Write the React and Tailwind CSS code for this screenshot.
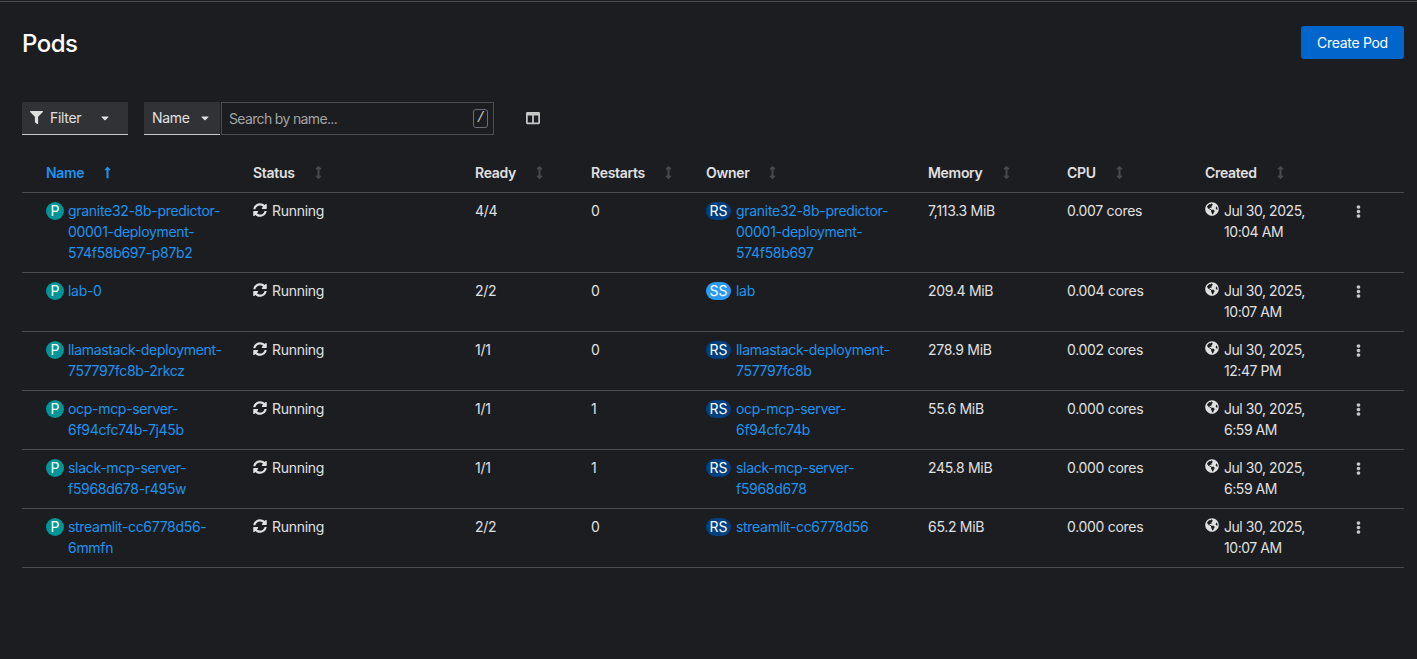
import { FaFilter, FaCaretDown, FaColumns, FaLongArrowAltUp, FaArrowsAltV, FaSyncAlt, FaGlobeAmericas, FaEllipsisV } from 'react-icons/fa'

const pods = [
  { name: 'granite32-8b-predictor-00001-deployment-574f58b697-p87b2', ready: '4/4', restarts: '0', kind: 'RS', owner: 'granite32-8b-predictor-00001-deployment-574f58b697', memory: '7,113.3 MiB', cpu: '0.007 cores', date: '10:04 AM' },
  { name: 'lab-0', ready: '2/2', restarts: '0', kind: 'SS', owner: 'lab', memory: '209.4 MiB', cpu: '0.004 cores', date: '10:07 AM' },
  { name: 'llamastack-deployment-757797fc8b-2rkcz', ready: '1/1', restarts: '0', kind: 'RS', owner: 'llamastack-deployment-757797fc8b', memory: '278.9 MiB', cpu: '0.002 cores', date: '12:47 PM' },
  { name: 'ocp-mcp-server-6f94cfc74b-7j45b', ready: '1/1', restarts: '1', kind: 'RS', owner: 'ocp-mcp-server-6f94cfc74b', memory: '55.6 MiB', cpu: '0.000 cores', date: '6:59 AM' },
  { name: 'slack-mcp-server-f5968d678-r495w', ready: '1/1', restarts: '1', kind: 'RS', owner: 'slack-mcp-server-f5968d678', memory: '245.8 MiB', cpu: '0.000 cores', date: '6:59 AM' },
  { name: 'streamlit-cc6778d56-6mmfn', ready: '2/2', restarts: '0', kind: 'RS', owner: 'streamlit-cc6778d56', memory: '65.2 MiB', cpu: '0.000 cores', date: '10:07 AM' },
]

const columns = [
  { label: 'Name', width: 'w-[231px]' },
  { label: 'Status', width: 'w-[222px]' },
  { label: 'Ready', width: 'w-[116px]' },
  { label: 'Restarts', width: 'w-[115px]' },
  { label: 'Owner', width: 'w-[222px]' },
  { label: 'Memory', width: 'w-[139px]' },
  { label: 'CPU', width: 'w-[138px]' },
  { label: 'Created', width: 'w-[135px]' },
]

function Badge({ kind }) {
  const color = kind === 'P' ? 'bg-[#009596] w-[18px]' : kind === 'SS' ? 'bg-[#2b9af3] w-[25px]' : 'bg-[#004080] w-[25px]'
  return (
    <span className={`${color} h-[18px] rounded-full text-white text-[14px] leading-[18px] tracking-normal text-center inline-block shrink-0 mt-[2px]`}>
      {kind}
    </span>
  )
}

export default function App() {
  return (
    <div className="min-h-screen bg-[#1b1d21] pt-[1px] font-['Inter',sans-serif] text-[14px] leading-[21px] tracking-[-0.3px] text-[#e0e0e0]">
      <div className="border-t border-[#4a4c50] pl-[22px] pr-[13px]">
        <div className="flex justify-between items-start pt-[24px]">
          <h1 className="text-[24px] leading-[36px] font-medium tracking-[-0.5px] text-white">Pods</h1>
          <button className="w-[103px] h-[33px] bg-[#0066cc] rounded-[3px] text-white text-[14px]">Create Pod</button>
        </div>

        <div className="flex items-stretch h-[33px] mt-[40px]">
          <button className="w-[106px] flex items-center pl-[8px] bg-[#303236] border-b border-[#c7c7c7] text-[#e0e0e0] pb-[1px]">
            <FaFilter className="text-[13px] mr-[7px]" />
            <span>Filter</span>
            <FaCaretDown className="text-[12px] ml-[18px] text-[#e0e0e0]" />
          </button>
          <button className="w-[76px] ml-[16px] flex items-center pl-[8px] bg-[#303236] border-b border-[#c7c7c7] text-[#e0e0e0] pb-[1px]">
            <span>Name</span>
            <FaCaretDown className="text-[12px] ml-[9px]" />
          </button>
          <div className="w-[273px] ml-[1px] flex items-center justify-between pl-[7px] pr-[5px] border border-[#4a4c50]">
            <span className="text-[#a3a3a3] tracking-[-0.65px] -mt-[1px]">Search by name...</span>
            <kbd className="w-[15px] h-[19px] border border-[#6a6e73] rounded-[3px] text-[14px] leading-[17px] text-center text-[#c7c7c7]">/</kbd>
          </div>
          <span className="ml-[32px] flex items-center text-[#c7c7c7] pb-[1px]"><FaColumns className="text-[14px]" /></span>
        </div>

        <table className="mt-[17px] w-[1382px] table-fixed border-collapse">
          <thead>
            <tr className="border-b border-[#4a4c50]">
              {columns.map((c, i) => (
                <th key={c.label} className={`${c.width} h-[40px] text-left align-middle font-semibold pt-[2px] ${i === 0 ? 'pl-[24px]' : ''}`}>
                  <span className={`inline-flex items-center ${i === 0 ? 'text-[#1f93ee]' : 'text-[#e0e0e0]'}`}>
                    {c.label}
                    {i === 0
                      ? <FaLongArrowAltUp className="text-[13px] ml-[17px] text-[#1f93ee]" />
                      : <FaArrowsAltV className="text-[13px] ml-[17px] text-[#46484c]" />}
                  </span>
                </th>
              ))}
              <th />
            </tr>
          </thead>
          <tbody>
            {pods.map(p => (
              <tr key={p.name} className="border-b border-[#4a4c50] align-top">
                <td className="pl-[24px] pr-[8px] pt-[7px] pb-[9px]">
                  <div className="flex gap-[4px]">
                    <Badge kind="P" />
                    <a className="text-[#1f93ee] break-words min-w-0">{p.name}</a>
                  </div>
                </td>
                <td className="pt-[7px] pb-[9px]">
                  <span className="flex items-center gap-[5px]"><FaSyncAlt className="text-[14px] text-[#e0e0e0]" />Running</span>
                </td>
                <td className="pt-[7px] pb-[9px]">{p.ready}</td>
                <td className="pt-[7px] pb-[9px]">{p.restarts}</td>
                <td className="pt-[7px] pb-[9px] pr-[30px]">
                  <div className="flex gap-[5px]">
                    <Badge kind={p.kind} />
                    <a className="text-[#1f93ee] break-words min-w-0">{p.owner}</a>
                  </div>
                </td>
                <td className="pt-[7px] pb-[9px]">{p.memory}</td>
                <td className="pt-[7px] pb-[9px]">{p.cpu}</td>
                <td className="pt-[7px] pb-[9px]">
                  <div className="flex gap-[5px]">
                    <FaGlobeAmericas className="text-[14px] mt-[2px] shrink-0 text-[#e0e0e0]" />
                    <span className="tracking-[-0.45px]">Jul 30, 2025,<br />{p.date}</span>
                  </div>
                </td>
                <td className="pt-[7px] pb-[9px]">
                  <FaEllipsisV className="text-[13px] mt-[5px] ml-[12px] text-[#c7c7c7]" />
                </td>
              </tr>
            ))}
          </tbody>
        </table>
      </div>
    </div>
  )
}
